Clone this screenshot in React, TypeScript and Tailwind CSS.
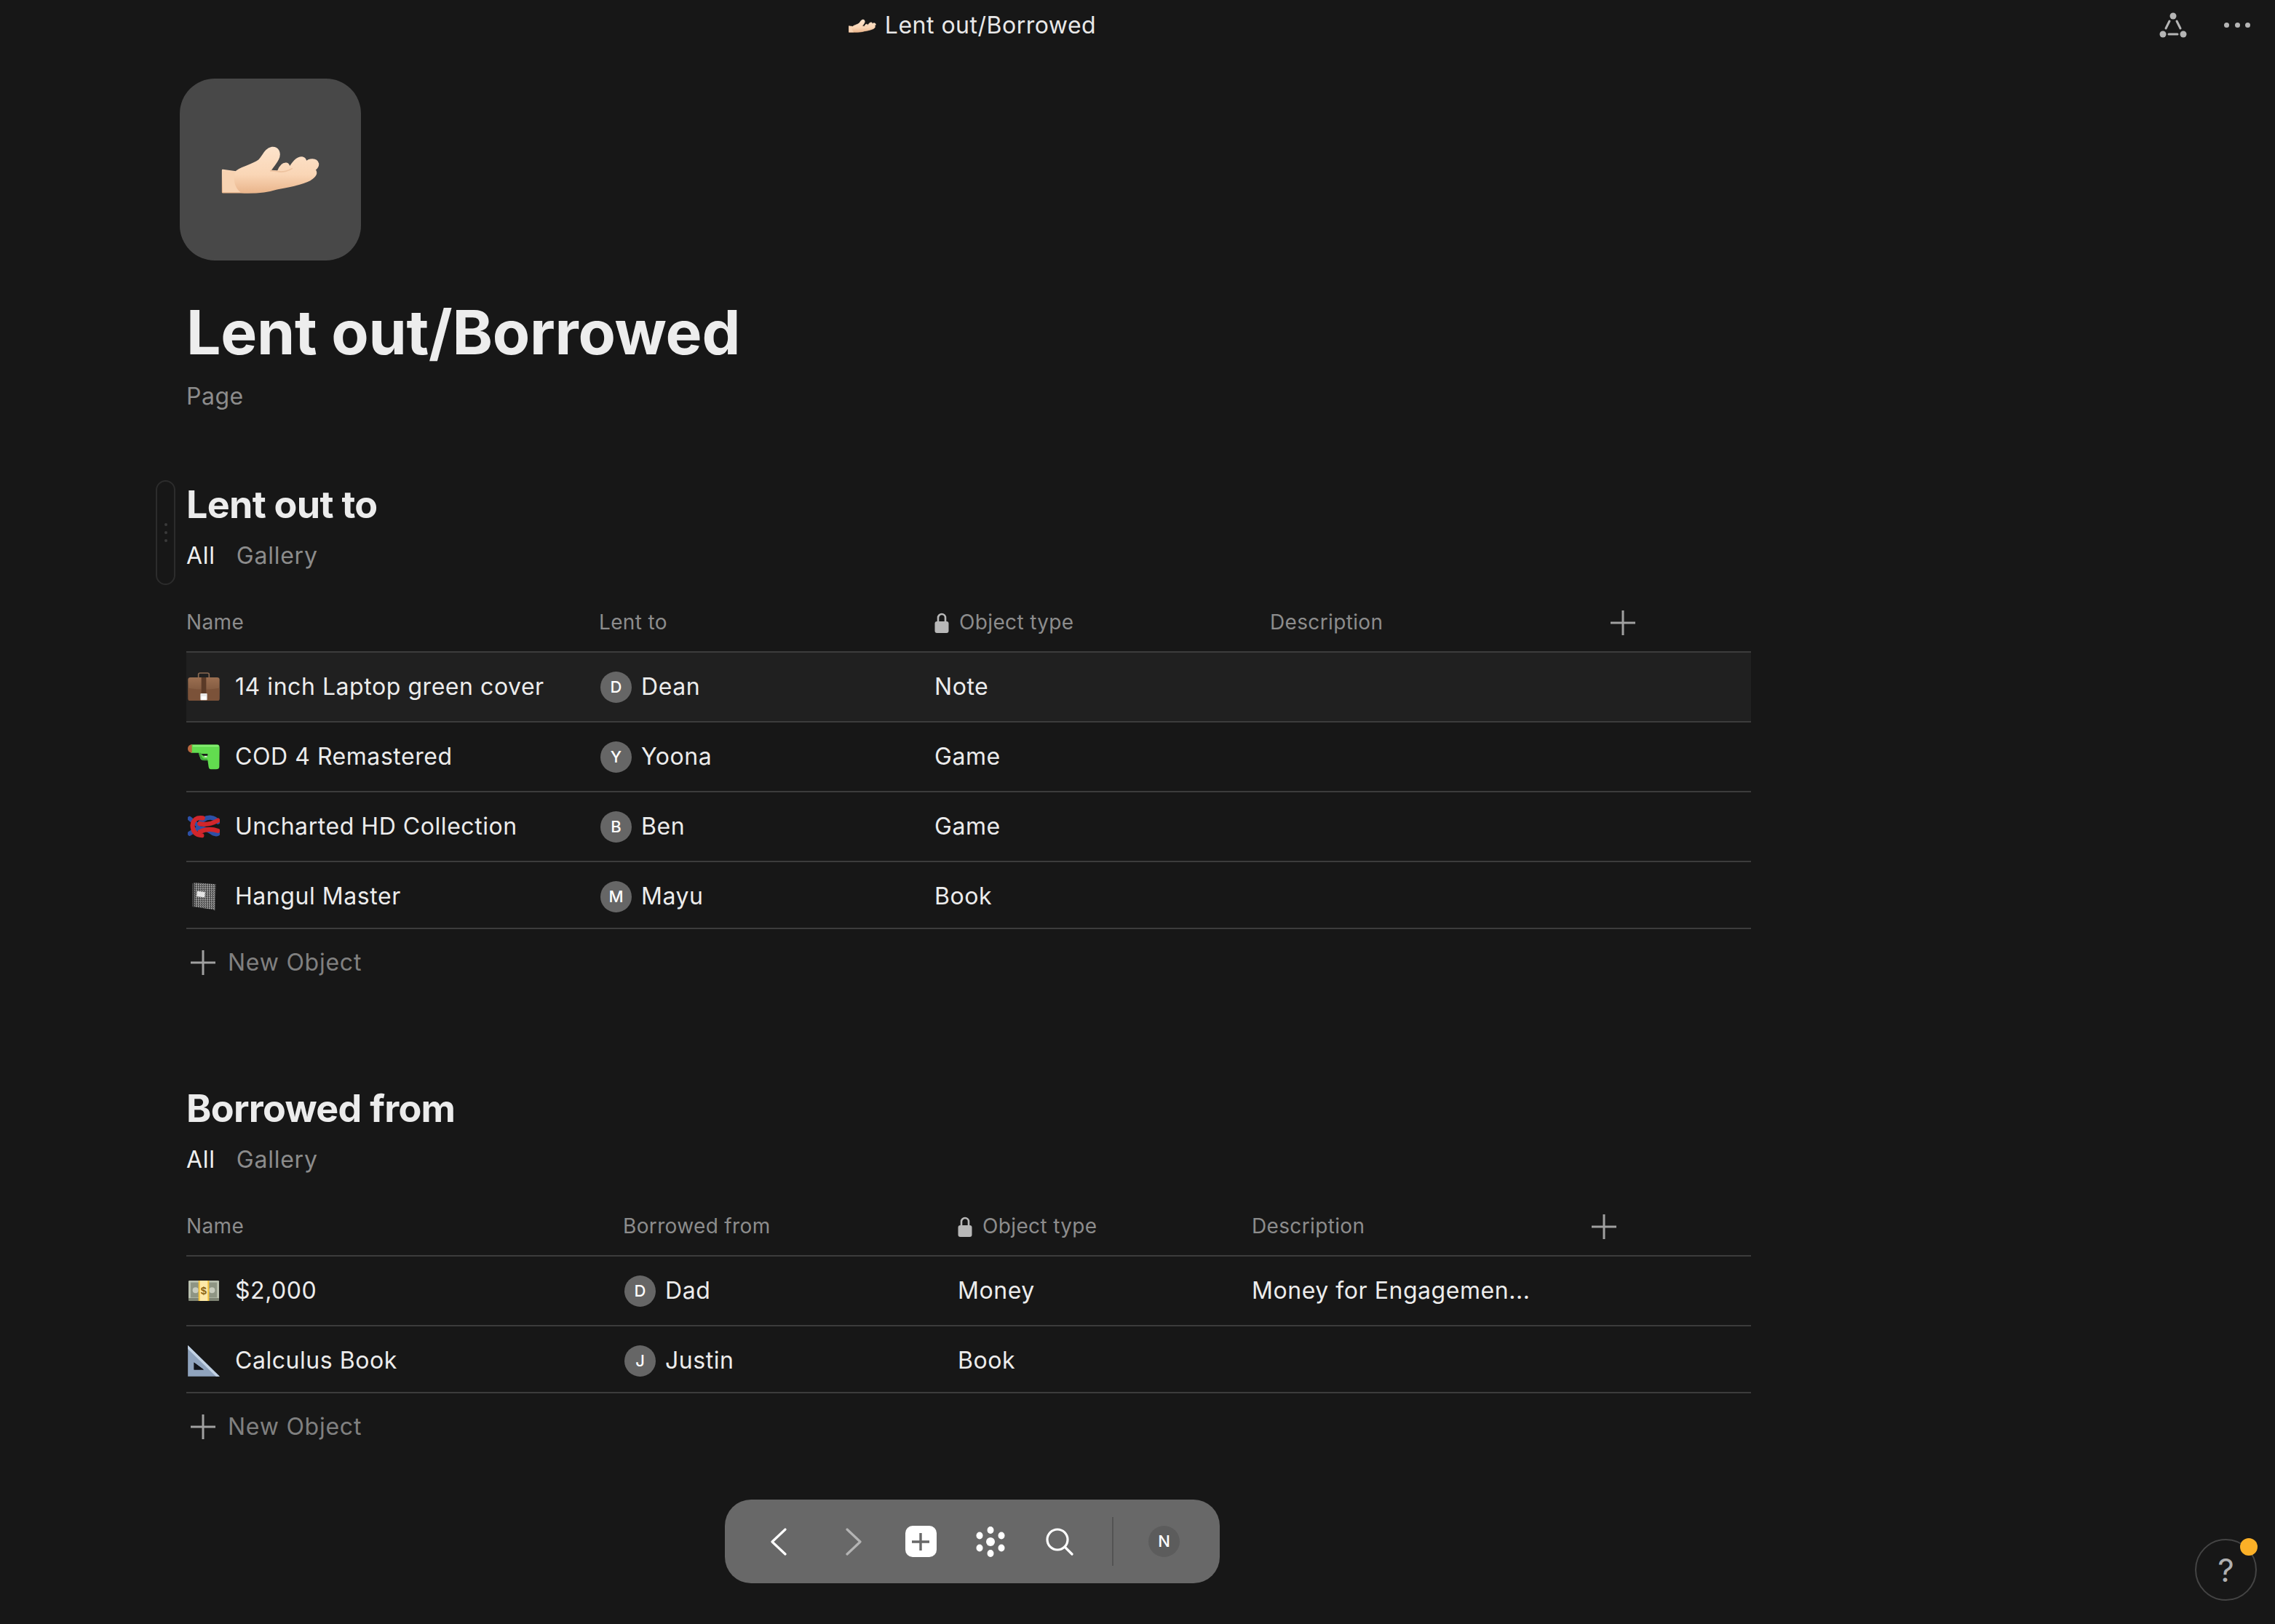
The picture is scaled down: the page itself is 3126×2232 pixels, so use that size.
const FONT = "font-['Inter','Noto_Sans',sans-serif]";

function HandEmoji({ className }: { className: string }) {
  return (
    <svg viewBox="70 55 410 200" className={className}>
      <defs>
        <linearGradient id="handFill" x1="0" y1="0" x2="0" y2="1">
          <stop offset="0" stopColor="#fde3cb" />
          <stop offset="0.6" stopColor="#fad6b6" />
          <stop offset="1" stopColor="#eab68d" />
        </linearGradient>
      </defs>
      <path
        d="M75 158 L130 165 C150 145 195 140 225 118 C245 100 250 70 280 64 C305 62 318 85 305 112 C296 130 280 148 272 160 L305 163 C312 145 322 128 340 130 C350 132 352 142 352 150 C365 130 380 105 405 105 C420 107 422 120 420 126 C435 110 465 108 472 130 C474 145 462 152 458 156 C470 170 460 185 440 197 C400 218 340 228 300 235 C260 248 200 252 150 250 L75 250 Z"
        fill="url(#handFill)"
        stroke="url(#handFill)"
        strokeWidth="7"
        strokeLinejoin="round"
      />
      <path d="M75 158 L128 165 C118 190 122 230 150 250 L75 250 Z" fill="#f8d3b2" />
      <path d="M272 160 L305 163 C325 168 350 160 365 150" fill="none" stroke="#eec3a0" strokeWidth="5" />
    </svg>
  );
}

function Briefcase() {
  return (
    <svg viewBox="55 15 130 120" className="w-[44px] h-[40px]">
      <defs>
        <linearGradient id="caseFill" x1="0" y1="0" x2="0" y2="1">
          <stop offset="0" stopColor="#9b6f51" />
          <stop offset="1" stopColor="#6f4a33" />
        </linearGradient>
      </defs>
      <path d="M98 38 V24 Q98 18 105 18 H135 Q142 18 142 24 V38" fill="none" stroke="#8a6a52" strokeWidth="5" />
      <rect x="55" y="36" width="130" height="96" rx="10" fill="url(#caseFill)" />
      <path d="M56 80 Q120 92 184 80 V128 Q184 132 176 132 H64 Q56 132 56 128 Z" fill="#7b5239" />
      <rect x="110" y="36" width="20" height="66" fill="#5a3a27" />
      <rect x="106" y="102" width="28" height="28" rx="3" fill="#e8e8e8" />
      <rect x="110" y="114" width="20" height="14" fill="#ffffff" />
    </svg>
  );
}

function WaterPistol() {
  return (
    <svg viewBox="55 308 132 108" className="w-[44px] h-[36px]">
      <path d="M68 312 H175 Q187 312 186 326 L185 404 Q184 414 172 414 H150 Q143 414 141 404 L137 376 H124 Q114 378 108 372 L100 346 H68 Z" fill="#62dc4f" />
      <path d="M100 346 Q104 376 124 378 H136 V370 H122 Q112 368 110 346 Z" fill="#3fa83a" />
      <rect x="124" y="358" width="10" height="6" fill="#e6e6e6" />
      <path d="M110 350 H137 V358 H118 Z" fill="#1b1f1a" />
      <path d="M72 312 Q55 314 55 329 Q55 344 72 346 Z" fill="#b9683f" />
      <path d="M78 318 H180" stroke="#8cf07a" strokeWidth="6" strokeLinecap="round" />
    </svg>
  );
}

function Knot() {
  return (
    <svg viewBox="52 598 136 96" className="w-[45px] h-[32px]">
      <g fill="none" strokeLinecap="round" strokeWidth="19">
        <path d="M60 612 L94 640" stroke="#2d50a6" />
        <path d="M96 642 Q118 606 150 608 Q170 610 180 626" stroke="#2d50a6" />
        <path d="M60 676 L92 656 Q122 650 150 668 Q168 682 180 676" stroke="#2d50a6" />
        <path d="M116 610 Q76 604 72 642 Q74 682 112 684" stroke="#d1262b" />
        <path d="M102 634 Q140 642 180 620" stroke="#d1262b" />
        <path d="M104 668 Q140 650 180 664" stroke="#d1262b" />
      </g>
    </svg>
  );
}

function Notebook() {
  return (
    <svg viewBox="72 872 102 120" className="w-[34px] h-[40px]">
      <defs>
        <pattern id="speckle" width="9" height="9" patternUnits="userSpaceOnUse">
          <rect width="9" height="9" fill="#5a5a5a" />
          <rect x="0" y="0" width="3" height="3" fill="#e6e6e6" />
          <rect x="3" y="6" width="3" height="3" fill="#c4c4c4" />
          <rect x="6" y="3" width="3" height="3" fill="#1e1e1e" />
        </pattern>
      </defs>
      <path d="M76 880 L84 875 L172 882 L170 990 L160 986 L76 974 Z" fill="url(#speckle)" />
      <path d="M76 880 L84 875 L84 976 L76 974 Z" fill="#3a3a3a" />
      <path d="M96 910 L128 914 L126 936 L94 932 Z" fill="#e4e4e4" />
    </svg>
  );
}

function Money() {
  return (
    <svg viewBox="55 53 130 90" className="w-[44px] h-[30px]">
      <rect x="57" y="56" width="126" height="80" rx="4" fill="#b9bfae" />
      <rect x="57" y="128" width="126" height="12" rx="2" fill="#7e8474" />
      <rect x="66" y="64" width="108" height="62" fill="#8e9584" />
      <circle cx="86" cy="96" r="12" fill="#c8ccbe" />
      <circle cx="154" cy="96" r="12" fill="#c8ccbe" />
      <rect x="98" y="56" width="44" height="84" fill="#f5c33b" />
      <rect x="104" y="56" width="32" height="84" fill="#fde9a8" />
      <text x="120" y="112" textAnchor="middle" fontFamily="Liberation Sans" fontWeight="700" fontSize="44" fill="#8a6414">$</text>
    </svg>
  );
}

function SetSquare() {
  return (
    <svg viewBox="55 325 130 128" className="w-[44px] h-[43px]">
      <path fillRule="evenodd" d="M55 325 L185 452 H55 Z M80 395 V425 H120 Z" fill="#8fa3bd" />
      <path d="M55 325 L185 452 H170 L55 340 Z" fill="#c3d3e5" />
      <path d="M80 395 L120 425 H80 Z" fill="#10131a" />
    </svg>
  );
}

function PlusLine({ className }: { className: string }) {
  return (
    <svg viewBox="0 0 34 34" className={className} fill="none" stroke="currentColor" strokeWidth="3">
      <path d="M17 0 V34 M0 17 H34" />
    </svg>
  );
}

function Lock() {
  return (
    <svg viewBox="0 0 20 28" className="w-[20px] h-[28px] text-[#b8b8b8]">
      <path d="M5 14 V7 a5 5 0 0 1 10 0 V14" fill="none" stroke="currentColor" strokeWidth="2.6" />
      <rect x="0.5" y="12" width="19" height="16" rx="3" fill="currentColor" />
    </svg>
  );
}

type Row = { icon: React.ReactNode; name: string; person: string; type: string; description?: string; hover?: boolean };

const lent: Row[] = [
  { icon: <Briefcase />, name: "14 inch Laptop green cover", person: "Dean", type: "Note", hover: true },
  { icon: <WaterPistol />, name: "COD 4 Remastered", person: "Yoona", type: "Game" },
  { icon: <Knot />, name: "Uncharted HD Collection", person: "Ben", type: "Game" },
  { icon: <Notebook />, name: "Hangul Master", person: "Mayu", type: "Book" },
];

const borrowed: Row[] = [
  { icon: <Money />, name: "$2,000", person: "Dad", type: "Money", description: "Money for Engagemen..." },
  { icon: <SetSquare />, name: "Calculus Book", person: "Justin", type: "Book" },
];

function DataSection({
  title,
  column,
  rows,
  grid,
  className,
}: {
  title: string;
  column: string;
  rows: Row[];
  grid: string;
  className: string;
}) {
  return (
    <section className={className}>
      <h2 className="h-[64px] leading-[64px] text-[52px] font-bold tracking-[-0.7px] text-[#ececec]">{title}</h2>
      <div className="mt-[18px] flex gap-[29px] h-[40px] leading-[40px] text-[32px] tracking-[0.75px]">
        <span className="text-[#f0f0f0]">All</span>
        <span className="text-[#8c8c8c]">Gallery</span>
      </div>
      <div className={`mt-[33px] h-[80px] grid items-center border-b-2 border-[#3c3c3c] text-[28px] tracking-[0.35px] text-[#8c8c8c] ${grid}`}>
        <span className="-translate-y-[1px]">Name</span>
        <span className="-translate-y-[1px]">{column}</span>
        <span className="flex items-center gap-[14px]">
          <Lock />
          <span className="-translate-y-[1px]">Object type</span>
        </span>
        <span className="-translate-y-[1px]">Description</span>
        <PlusLine className="ml-[7px] w-[34px] h-[34px] text-[#a0a0a0]" />
      </div>
      {rows.map((row, i) => (
        <div
          key={row.name}
          className={`grid items-center border-b-2 border-[#3c3c3c] text-[32px] tracking-[0.55px] text-[#ececec] ${grid} ${
            i === rows.length - 1 ? "h-[92px] pt-[4px]" : "h-[96px]"
          } ${row.hover ? "bg-[#202020]" : ""}`}
        >
          <div className="flex items-center">
            <span className="w-[67px] pl-[2px] flex items-center justify-center pr-[21px]">{row.icon}</span>
            <span>{row.name}</span>
          </div>
          <div className="flex items-center gap-[13px] pl-[2px]">
            <span className="w-[43px] h-[43px] rounded-full bg-[#666666] flex items-center justify-center text-[22px] font-medium tracking-normal text-white">
              {row.person[0]}
            </span>
            <span>{row.person}</span>
          </div>
          <span>{row.type}</span>
          <span>{row.description}</span>
        </div>
      ))}
      <div className="mt-[14px] h-[64px] flex items-center gap-[17px] pl-[6px] text-[32px] tracking-[0.75px] text-[#808080]">
        <PlusLine className="w-[34px] h-[34px] text-[#a0a0a0]" />
        New Object
      </div>
    </section>
  );
}

export default function App() {
  return (
    <div className={`relative w-[3126px] h-[2232px] overflow-hidden bg-[#171717] ${FONT}`}>
      <header className="h-[68px] flex items-center">
        <div className="w-[2672px] pt-[2px] flex items-center justify-center gap-[12px] text-[32px] tracking-[0.5px] text-[#e8e8e8]">
          <HandEmoji className="w-[38px] h-[19px]" />
          Lent out/Borrowed
        </div>
        <svg viewBox="0 0 40 36" className="ml-[294px] w-[40px] h-[36px] text-[#b5b5b5]">
          <g fill="currentColor">
            <circle cx="20" cy="6" r="4.5" />
            <circle cx="6" cy="31" r="4.5" />
            <circle cx="34" cy="31" r="4.5" />
          </g>
          <path d="M15 13 L10 23 M25 13 L30 23 M14 31 H26" stroke="currentColor" strokeWidth="3" strokeLinecap="round" />
        </svg>
        <div className="ml-[50px] flex gap-[7.5px]">
          <span className="w-[7px] h-[7px] rounded-full bg-[#b5b5b5]" />
          <span className="w-[7px] h-[7px] rounded-full bg-[#b5b5b5]" />
          <span className="w-[7px] h-[7px] rounded-full bg-[#b5b5b5]" />
        </div>
      </header>

      <main className="w-[2406px] pl-[256px]">
        <div className="-ml-[9px] mt-[40px] w-[249px] h-[250px] rounded-[48px] bg-[#484848] flex items-center justify-center">
          <HandEmoji className="w-[136px] h-[66px]" />
        </div>
        <h1 className="mt-[49px] h-[100px] leading-[100px] text-[84px] font-bold tracking-[-0.25px] text-[#ededed]">
          Lent out/Borrowed
        </h1>
        <p className="mt-[18px] h-[40px] leading-[40px] text-[32px] tracking-[0.5px] text-[#8c8c8c]">Page</p>

        <DataSection
          title="Lent out to"
          column="Lent to"
          rows={lent}
          grid="grid-cols-[567px_461px_461px_461px_1fr]"
          className="mt-[97px]"
        />
        <DataSection
          title="Borrowed from"
          column="Borrowed from"
          rows={borrowed}
          grid="grid-cols-[600px_460px_404px_460px_1fr]"
          className="mt-[137px]"
        />
      </main>

      {/* drag handle next to the hovered block */}
      <div className="absolute left-[214px] top-[660px] w-[27px] h-[144px] rounded-full border-2 border-[#2c2c2c] flex flex-col items-center justify-center gap-[7px]">
        <span className="w-[4px] h-[4px] rounded-full bg-[#3a3a3a]" />
        <span className="w-[4px] h-[4px] rounded-full bg-[#3a3a3a]" />
        <span className="w-[4px] h-[4px] rounded-full bg-[#3a3a3a]" />
      </div>

      {/* floating navigation */}
      <nav className="absolute left-[996px] top-[2061px] w-[680px] h-[115px] rounded-[36px] bg-[#686868] flex items-center pl-[26px]">
        <span className="w-[96px] flex justify-center">
          <svg viewBox="0 0 22 38" className="w-[22px] h-[38px]" fill="none" stroke="#ffffff" strokeWidth="3.2" strokeLinecap="round" strokeLinejoin="round">
            <path d="M20 2 L2 19 L20 36" />
          </svg>
        </span>
        <span className="w-[110px] flex justify-center">
          <svg viewBox="0 0 22 38" className="w-[22px] h-[38px]" fill="none" stroke="#b4b4b4" strokeWidth="3.2" strokeLinecap="round" strokeLinejoin="round">
            <path d="M2 2 L20 19 L2 36" />
          </svg>
        </span>
        <span className="w-[74px] flex justify-center">
          <span className="w-[43px] h-[43px] rounded-[10px] bg-white flex items-center justify-center">
            <svg viewBox="0 0 24 24" className="w-[24px] h-[24px]" fill="none" stroke="#686868" strokeWidth="3.4">
              <path d="M12 0 V24 M0 12 H24" />
            </svg>
          </span>
        </span>
        <span className="w-[118px] flex justify-center">
          <svg viewBox="0 0 40 42" className="w-[40px] h-[42px]" fill="#ffffff">
            <circle cx="20" cy="21" r="6" />
            <ellipse cx="20" cy="5" rx="4.5" ry="5" />
            <ellipse cx="20" cy="37" rx="4.5" ry="5" />
            <ellipse cx="5" cy="12.5" rx="4.5" ry="5" />
            <ellipse cx="35" cy="12.5" rx="4.5" ry="5" />
            <ellipse cx="5" cy="29.5" rx="4.5" ry="5" />
            <ellipse cx="35" cy="29.5" rx="4.5" ry="5" />
          </svg>
        </span>
        <span className="w-[72px] flex justify-center">
          <svg viewBox="0 0 38 38" className="w-[38px] h-[38px]" fill="none" stroke="#ffffff" strokeWidth="3.2" strokeLinecap="round">
            <circle cx="16" cy="16" r="14" />
            <path d="M26 26 L36 36" />
          </svg>
        </span>
        <span className="ml-[36px] w-[2px] h-[67px] bg-[#535353]" />
        <span className="ml-[48px] w-[43px] h-[43px] rounded-full bg-[#5c5c5c] flex items-center justify-center text-[22px] font-medium text-white">
          N
        </span>
      </nav>

      {/* help button */}
      <div className="absolute left-[3016px] top-[2115px] w-[85px] h-[85px] rounded-full border-2 border-[#444444] flex items-center justify-center text-[44px] text-[#b0b0b0]">
        ?
      </div>
      <span className="absolute left-[3078px] top-[2114px] w-[24px] h-[24px] rounded-full bg-[#fbb027]" />
    </div>
  );
}
